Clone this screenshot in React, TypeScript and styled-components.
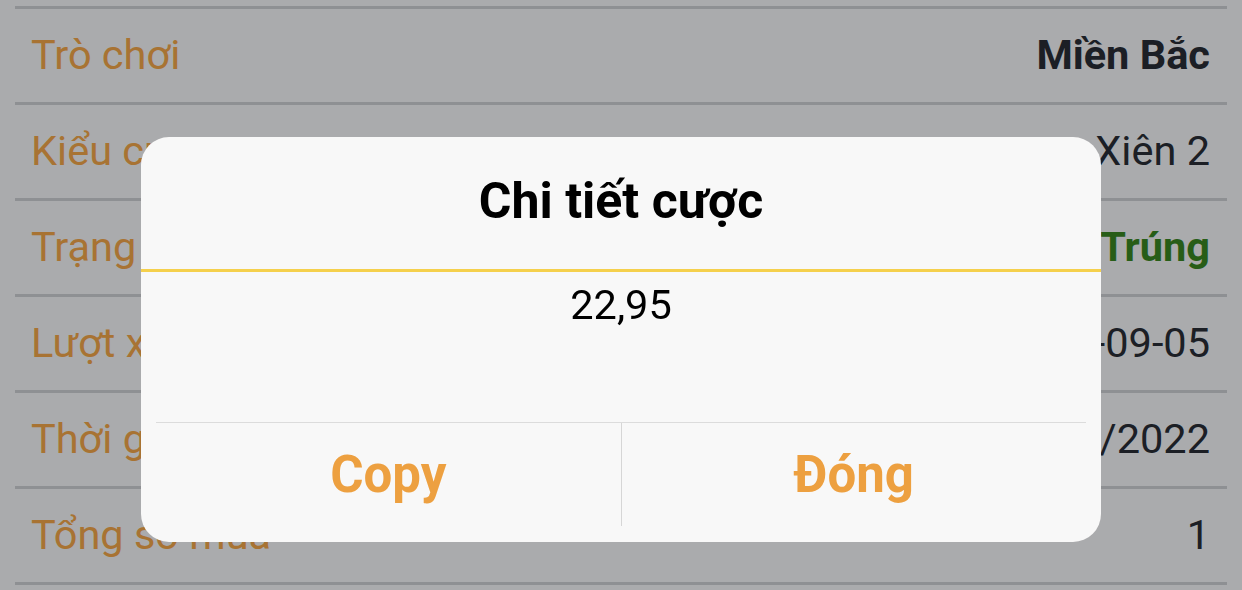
import styled, { createGlobalStyle } from "styled-components";

const GlobalStyle = createGlobalStyle`
  html, body {
    margin: 0;
    padding: 0;
    background: #ffffff;
    font-family: Roboto, "Noto Sans", "Liberation Sans", sans-serif;
  }
  * { box-sizing: border-box; }
`;

interface DetailRow {
    label: string;
    value: string;
    tone?: "bold" | "win";
}

const rows: DetailRow[] = [
    { label: "Trò chơi", value: "Miền Bắc", tone: "bold" },
    { label: "Kiểu cược", value: "Xiên 2" },
    { label: "Trạng thái", value: "Trúng", tone: "win" },
    { label: "Lượt xổ", value: "2022-09-05" },
    { label: "Thời gian", value: "05/09/2022" },
    { label: "Tổng số mua", value: "1" },
];

const Page = styled.div`
  width: 1242px;
  height: 590px;
  overflow: hidden;
  padding: 6px 15px 0;
`;

const List = styled.div`
  border-top: 3px solid #d6d7d9;
`;

const Row = styled.div`
  height: 96px;
  display: flex;
  align-items: center;
  justify-content: space-between;
  padding: 0 17px 2px 16px;
  border-bottom: 3px solid #d6d7d9;
  font-size: 41.5px;
`;

const Label = styled.span`
  color: #fdac48;
`;

const Value = styled.span<{ $tone?: "bold" | "win" }>`
  color: ${(p) => (p.$tone === "win" ? "#3b8b1e" : "#2a2d33")};
  font-weight: ${(p) => (p.$tone ? 700 : 400)};
`;

const Overlay = styled.div`
  position: fixed;
  inset: 0;
  background: rgba(0, 2, 8, 0.335);
  display: flex;
  justify-content: center;
  align-items: flex-start;
  padding-top: 137px;
`;

const Dialog = styled.div`
  width: 960px;
  height: 405px;
  background: #f8f8f8;
  border-radius: 28px;
  display: flex;
  flex-direction: column;
  overflow: hidden;
`;

const Title = styled.h2`
  margin: 0;
  height: 135px;
  display: flex;
  align-items: center;
  justify-content: center;
  font-size: 50px;
  font-weight: 700;
  color: #000;
  border-bottom: 3px solid #f5d04c;
  padding-bottom: 4px;
`;

const Body = styled.div`
  flex: 1;
  text-align: center;
  padding-top: 9px;
  font-size: 41.5px;
  line-height: 48px;
  color: #000;
`;

const Actions = styled.div`
  height: 120px;
  margin: 0 15px;
  padding-bottom: 16px;
  border-top: 1px solid #dcdcdc;
  display: flex;
`;

const ActionButton = styled.button<{ $divider?: boolean }>`
  flex: 1;
  border: none;
  background: transparent;
  border-right: ${(p) => (p.$divider ? "1px solid #d6d6d6" : "none")};
  font-family: inherit;
  font-size: 51px;
  font-weight: 700;
  color: #eda040;
  padding: 0;
  cursor: pointer;
`;

export default function App() {
    return (
        <>
            <GlobalStyle />
            <Page>
                <List>
                    {rows.map((r) => (
                        <Row key={r.label}>
                            <Label>{r.label}</Label>
                            <Value $tone={r.tone}>{r.value}</Value>
                        </Row>
                    ))}
                </List>
            </Page>
            <Overlay>
                <Dialog>
                    <Title>Chi tiết cược</Title>
                    <Body>22,95</Body>
                    <Actions>
                        <ActionButton $divider>Copy</ActionButton>
                        <ActionButton>Đóng</ActionButton>
                    </Actions>
                </Dialog>
            </Overlay>
        </>
    );
}
